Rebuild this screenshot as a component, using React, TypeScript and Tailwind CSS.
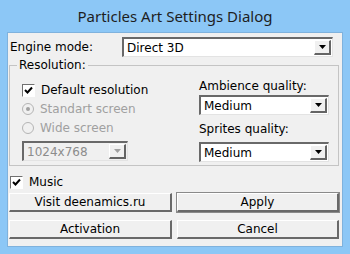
import React from 'react';

const ui = { fontFamily: '"DejaVu Sans", Verdana, sans-serif' };

function Arrow({ disabled = false }: { disabled?: boolean }) {
  return (
    <div className="flex h-full w-[17px] items-center justify-center border-l border-t border-white border-r-2 border-b-2 border-r-[#646464] border-b-[#646464] bg-[#f0f0f0]">
      <svg width="7" height="4" viewBox="0 0 7 4">
        <path d="M0 0h7L3.5 4z" fill={disabled ? '#a0a0a0' : '#000'} />
      </svg>
    </div>
  );
}

function Select({ value, className = '', disabled = false }: { value: string; className?: string; disabled?: boolean }) {
  return (
    <div
      className={`flex h-[20px] items-stretch border-l-2 border-t-2 border-[#696969] border-r border-b border-r-[#e3e3e3] border-b-[#e3e3e3] ${
        disabled ? 'bg-[#f0f0f0] text-[#8c8c8c]' : 'bg-white text-black'
      } ${className}`}
    >
      <div className="flex flex-1 items-center pl-[3px] text-[12px]">{value}</div>
      <div className="p-[1px]">
        <Arrow disabled={disabled} />
      </div>
    </div>
  );
}

function Check({ label }: { label: string }) {
  return (
    <div className="flex h-[14px] items-center gap-[6px]">
      <div className="flex h-[13px] w-[13px] items-center justify-center border-l border-t border-[#707070] border-r border-b border-r-white border-b-white bg-white">
        <svg width="9" height="9" viewBox="0 0 9 9">
          <path d="M1 4l2.5 2.5L8 1.5" stroke="#000" strokeWidth="2" fill="none" />
        </svg>
      </div>
      <span className="text-[12px] leading-[14px] text-black">{label}</span>
    </div>
  );
}

function Radio({ label, checked = false }: { label: string; checked?: boolean }) {
  return (
    <div className="flex h-[14px] items-center gap-[6px]">
      <div className="flex h-[12px] w-[12px] items-center justify-center rounded-full border border-[#b4b4b4] bg-[#f0f0f0]">
        {checked && <div className="h-[4px] w-[4px] rounded-full bg-[#a0a0a0]" />}
      </div>
      <span className="text-[12px] leading-[14px] text-[#a0a0a0]">{label}</span>
    </div>
  );
}

function Btn({ label, strong = false }: { label: string; strong?: boolean }) {
  return (
    <div
      className={`flex h-[19px] items-center justify-center border-l border-t border-white border-r-2 border-b-2 border-r-[#696969] border-b-[#696969] bg-[#f0f0f0] text-[12px] text-black ${
        strong ? 'outline outline-1 outline-[#8a8a8a]' : ''
      }`}
    >
      {label}
    </div>
  );
}

export default function App() {
  return (
    <div className="flex h-[254px] w-[350px] flex-col bg-[#8cc7f6]" style={ui}>
      <div
        className="flex h-[32px] items-center justify-center text-[15px] text-[#1e1e1e]"
        style={{ fontFamily: '"Noto Sans", "Open Sans", sans-serif' }}
      >
        Particles Art Settings Dialog
      </div>
      <div className="mx-[7px] h-[215px] border border-[#7fb2dd] bg-[#f0f0f0]">
        <div className="mt-[4px] flex items-center">
          <div className="w-[114px] pl-[2px] text-[12px] text-black">Engine mode:</div>
          <Select value="Direct 3D" className="w-[211px]" />
        </div>

        <div className="relative ml-[1px] mt-[8px] flex h-[101px] w-[330px] border border-[#c4c4c4] pl-[12px]">
          <span className="absolute left-[7px] top-[-8px] bg-[#f0f0f0] px-[2px] text-[12px] leading-[14px] text-black">
            Resolution:
          </span>
          <div className="flex w-[177px] flex-col">
            <div className="mt-[17px]">
              <Check label="Default resolution" />
            </div>
            <div className="mt-[5px]">
              <Radio label="Standart screen" checked />
            </div>
            <div className="mt-[5px]">
              <Radio label="Wide screen" />
            </div>
            <Select value="1024x768" className="mt-[6px] w-[106px]" disabled />
          </div>
          <div className="flex flex-col">
            <div className="mt-[13px] text-[12px] leading-[14px] text-black">Ambience quality:</div>
            <Select value="Medium" className="mt-[2px] w-[130px]" />
            <div className="mt-[7px] text-[12px] leading-[14px] text-black">Sprites quality:</div>
            <Select value="Medium" className="mt-[6px] w-[130px]" />
          </div>
        </div>

        <div className="ml-[2px] mt-[9px]">
          <Check label="Music" />
        </div>

        <div className="ml-[1px] mt-[4px] grid w-[330px] grid-cols-[163px_162px] gap-x-[5px] gap-y-[8px]">
          <Btn label="Visit deenamics.ru" />
          <Btn label="Apply" strong />
          <Btn label="Activation" />
          <Btn label="Cancel" />
        </div>
      </div>
    </div>
  );
}
